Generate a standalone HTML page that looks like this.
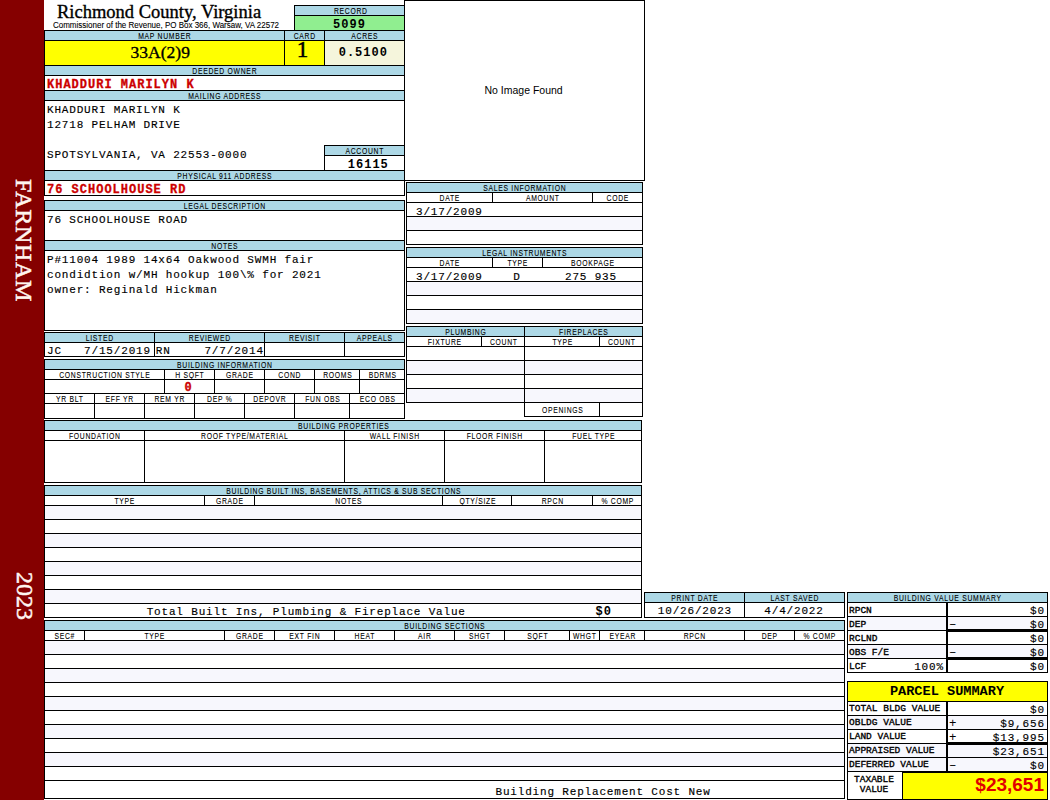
<!DOCTYPE html>
<html><head><meta charset="utf-8"><style>
html,body{margin:0;padding:0;background:#fff;}
body{width:1050px;height:800px;overflow:hidden;position:relative;}
i,b{position:absolute;display:block;font-style:normal;font-weight:normal;white-space:pre;}
</style></head><body>
<i style="left:0px;top:0px;width:44px;height:800px;background:#850000"></i>
<b style="left:12px;top:179px;writing-mode:vertical-rl;letter-spacing:0.7px;font-family:'Liberation Serif',serif;font-size:24px;line-height:24px;-webkit-text-stroke:0.5px #fff6f0;color:#fff6f0">FARNHAM</b>
<b style="left:13px;top:572px;writing-mode:vertical-rl;font-family:'Liberation Serif',serif;font-size:24px;line-height:24px;-webkit-text-stroke:0.5px #fff6f0;color:#fff6f0">2023</b>
<b style="top:3px;font-family:'Liberation Serif',serif;font-size:18.5px;line-height:18.5px;color:#000;left:57px;-webkit-text-stroke:0.35px #000;">Richmond County, Virginia</b>
<b style="top:21px;font-family:'Liberation Sans',sans-serif;font-size:8.5px;line-height:8.5px;color:#000;left:53px;transform:scaleX(0.94);transform-origin:0 0;-webkit-text-stroke:0.1px #000;">Commissioner of the Revenue, PO Box 366, Warsaw, VA 22572</b>
<i style="left:295px;top:6px;width:109px;height:9px;background:#add8e6"></i>
<i style="left:295px;top:16px;width:109px;height:14px;background:#90ee90"></i>
<i style="left:294px;top:5px;width:111px;height:1px;background:#000"></i>
<i style="left:294px;top:30px;width:111px;height:1px;background:#000"></i>
<i style="left:294px;top:5px;width:1px;height:26px;background:#000"></i>
<i style="left:404px;top:5px;width:1px;height:26px;background:#000"></i>
<i style="left:294px;top:15px;width:111px;height:1px;background:#000"></i>
<b style="top:7px;font-family:'Liberation Sans',sans-serif;font-size:8.5px;line-height:8.5px;color:#000;letter-spacing:0.9px;left:49.5px;width:600px;text-align:center;transform:scaleX(0.8);-webkit-text-stroke:0.1px #000;padding-left:0.9px;">RECORD</b>
<b style="top:19px;font-family:'Liberation Mono',monospace;font-size:12px;line-height:12px;color:#000;font-weight:bold;letter-spacing:1px;left:49.5px;width:600px;text-align:center;">5099</b>
<i style="left:45px;top:31px;width:359px;height:9px;background:#add8e6"></i>
<i style="left:45px;top:41px;width:279px;height:24px;background:#ffff00"></i>
<i style="left:325px;top:41px;width:79px;height:24px;background:#f5f5dc"></i>
<i style="left:44px;top:30px;width:361px;height:1px;background:#000"></i>
<i style="left:44px;top:40px;width:361px;height:1px;background:#000"></i>
<i style="left:44px;top:65px;width:361px;height:1px;background:#000"></i>
<i style="left:284px;top:30px;width:1px;height:36px;background:#000"></i>
<i style="left:324px;top:30px;width:1px;height:36px;background:#000"></i>
<b style="top:32px;font-family:'Liberation Sans',sans-serif;font-size:8.5px;line-height:8.5px;color:#000;letter-spacing:0.9px;left:-136px;width:600px;text-align:center;transform:scaleX(0.8);-webkit-text-stroke:0.1px #000;padding-left:0.9px;">MAP NUMBER</b>
<b style="top:32px;font-family:'Liberation Sans',sans-serif;font-size:8.5px;line-height:8.5px;color:#000;letter-spacing:0.9px;left:4px;width:600px;text-align:center;transform:scaleX(0.8);-webkit-text-stroke:0.1px #000;padding-left:0.9px;">CARD</b>
<b style="top:32px;font-family:'Liberation Sans',sans-serif;font-size:8.5px;line-height:8.5px;color:#000;letter-spacing:0.9px;left:64px;width:600px;text-align:center;transform:scaleX(0.8);-webkit-text-stroke:0.1px #000;padding-left:0.9px;">ACRES</b>
<b style="top:44px;font-family:'Liberation Serif',serif;font-size:17.5px;line-height:17.5px;color:#000;left:130.6px;-webkit-text-stroke:0.35px #000;">33A(2)9</b>
<b style="top:38px;font-family:'Liberation Serif',serif;font-size:23px;line-height:23px;color:#000;left:2.5px;width:600px;text-align:center;-webkit-text-stroke:0.5px #000;">1</b>
<b style="top:47px;font-family:'Liberation Mono',monospace;font-size:12px;line-height:12px;color:#000;font-weight:bold;letter-spacing:1px;left:338.7px;">0.5100</b>
<i style="left:45px;top:66px;width:359px;height:9px;background:#add8e6"></i>
<i style="left:44px;top:75px;width:361px;height:1px;background:#000"></i>
<i style="left:44px;top:90px;width:361px;height:1px;background:#000"></i>
<b style="top:67px;font-family:'Liberation Sans',sans-serif;font-size:8.5px;line-height:8.5px;color:#000;letter-spacing:0.9px;left:-76px;width:600px;text-align:center;transform:scaleX(0.8);-webkit-text-stroke:0.1px #000;padding-left:0.9px;">DEEDED OWNER</b>
<b style="top:79px;font-family:'Liberation Mono',monospace;font-size:12px;line-height:12px;color:#cc0000;font-weight:bold;letter-spacing:1px;left:47px;-webkit-text-stroke:0.3px;">KHADDURI MARILYN K</b>
<i style="left:45px;top:91px;width:359px;height:9px;background:#add8e6"></i>
<i style="left:44px;top:100px;width:361px;height:1px;background:#000"></i>
<b style="top:92px;font-family:'Liberation Sans',sans-serif;font-size:8.5px;line-height:8.5px;color:#000;letter-spacing:0.9px;left:-76px;width:600px;text-align:center;transform:scaleX(0.8);-webkit-text-stroke:0.1px #000;padding-left:0.9px;">MAILING ADDRESS</b>
<b style="top:105px;font-family:'Liberation Mono',monospace;font-size:11px;line-height:11px;color:#000;letter-spacing:0.82px;left:47px;-webkit-text-stroke:0.15px #000;">KHADDURI MARILYN K</b>
<b style="top:120px;font-family:'Liberation Mono',monospace;font-size:11px;line-height:11px;color:#000;letter-spacing:0.82px;left:47px;-webkit-text-stroke:0.15px #000;">12718 PELHAM DRIVE</b>
<b style="top:150px;font-family:'Liberation Mono',monospace;font-size:11px;line-height:11px;color:#000;letter-spacing:0.82px;left:47px;-webkit-text-stroke:0.15px #000;">SPOTSYLVANIA, VA 22553-0000</b>
<i style="left:325px;top:146px;width:79px;height:9px;background:#add8e6"></i>
<i style="left:324px;top:145px;width:81px;height:1px;background:#000"></i>
<i style="left:324px;top:155px;width:81px;height:1px;background:#000"></i>
<i style="left:324px;top:145px;width:1px;height:26px;background:#000"></i>
<b style="top:147px;font-family:'Liberation Sans',sans-serif;font-size:8.5px;line-height:8.5px;color:#000;letter-spacing:0.9px;left:64px;width:600px;text-align:center;transform:scaleX(0.8);-webkit-text-stroke:0.1px #000;padding-left:0.9px;">ACCOUNT</b>
<b style="top:159px;font-family:'Liberation Mono',monospace;font-size:12px;line-height:12px;color:#000;font-weight:bold;letter-spacing:1px;left:347.8px;">16115</b>
<i style="left:44px;top:170px;width:361px;height:1px;background:#000"></i>
<i style="left:45px;top:171px;width:359px;height:9px;background:#add8e6"></i>
<i style="left:44px;top:180px;width:361px;height:1px;background:#000"></i>
<i style="left:44px;top:195px;width:361px;height:1px;background:#000"></i>
<b style="top:172px;font-family:'Liberation Sans',sans-serif;font-size:8.5px;line-height:8.5px;color:#000;letter-spacing:0.9px;left:-76px;width:600px;text-align:center;transform:scaleX(0.8);-webkit-text-stroke:0.1px #000;padding-left:0.9px;">PHYSICAL 911 ADDRESS</b>
<b style="top:184px;font-family:'Liberation Mono',monospace;font-size:12px;line-height:12px;color:#cc0000;font-weight:bold;letter-spacing:1px;left:47px;-webkit-text-stroke:0.3px;">76 SCHOOLHOUSE RD</b>
<i style="left:44px;top:30px;width:1px;height:166px;background:#000"></i>
<i style="left:404px;top:0px;width:1px;height:196px;background:#000"></i>
<i style="left:45px;top:201px;width:359px;height:9px;background:#add8e6"></i>
<i style="left:44px;top:200px;width:361px;height:1px;background:#000"></i>
<i style="left:44px;top:330px;width:361px;height:1px;background:#000"></i>
<i style="left:44px;top:200px;width:1px;height:131px;background:#000"></i>
<i style="left:404px;top:200px;width:1px;height:131px;background:#000"></i>
<i style="left:44px;top:210px;width:361px;height:1px;background:#000"></i>
<i style="left:44px;top:240px;width:361px;height:1px;background:#000"></i>
<b style="top:202px;font-family:'Liberation Sans',sans-serif;font-size:8.5px;line-height:8.5px;color:#000;letter-spacing:0.9px;left:-76px;width:600px;text-align:center;transform:scaleX(0.8);-webkit-text-stroke:0.1px #000;padding-left:0.9px;">LEGAL DESCRIPTION</b>
<b style="top:215px;font-family:'Liberation Mono',monospace;font-size:11px;line-height:11px;color:#000;letter-spacing:0.82px;left:47px;-webkit-text-stroke:0.15px #000;">76 SCHOOLHOUSE ROAD</b>
<i style="left:45px;top:241px;width:359px;height:9px;background:#add8e6"></i>
<i style="left:44px;top:250px;width:361px;height:1px;background:#000"></i>
<b style="top:242px;font-family:'Liberation Sans',sans-serif;font-size:8.5px;line-height:8.5px;color:#000;letter-spacing:0.9px;left:-76px;width:600px;text-align:center;transform:scaleX(0.8);-webkit-text-stroke:0.1px #000;padding-left:0.9px;">NOTES</b>
<b style="top:255px;font-family:'Liberation Mono',monospace;font-size:11px;line-height:11px;color:#000;letter-spacing:0.82px;left:47px;-webkit-text-stroke:0.15px #000;">P#11004 1989 14x64 Oakwood SWMH fair</b>
<b style="top:270px;font-family:'Liberation Mono',monospace;font-size:11px;line-height:11px;color:#000;letter-spacing:0.82px;left:47px;-webkit-text-stroke:0.15px #000;">condidtion w/MH hookup 100\% for 2021</b>
<b style="top:285px;font-family:'Liberation Mono',monospace;font-size:11px;line-height:11px;color:#000;letter-spacing:0.82px;left:47px;-webkit-text-stroke:0.15px #000;">owner: Reginald Hickman</b>
<i style="left:45px;top:333px;width:359px;height:9px;background:#add8e6"></i>
<i style="left:44px;top:332px;width:361px;height:1px;background:#000"></i>
<i style="left:44px;top:356px;width:361px;height:1px;background:#000"></i>
<i style="left:44px;top:332px;width:1px;height:25px;background:#000"></i>
<i style="left:404px;top:332px;width:1px;height:25px;background:#000"></i>
<i style="left:44px;top:342px;width:361px;height:1px;background:#000"></i>
<i style="left:154px;top:332px;width:1px;height:25px;background:#000"></i>
<i style="left:264px;top:332px;width:1px;height:25px;background:#000"></i>
<i style="left:344px;top:332px;width:1px;height:25px;background:#000"></i>
<b style="top:334px;font-family:'Liberation Sans',sans-serif;font-size:8.5px;line-height:8.5px;color:#000;letter-spacing:0.9px;left:-201px;width:600px;text-align:center;transform:scaleX(0.8);-webkit-text-stroke:0.1px #000;padding-left:0.9px;">LISTED</b>
<b style="top:334px;font-family:'Liberation Sans',sans-serif;font-size:8.5px;line-height:8.5px;color:#000;letter-spacing:0.9px;left:-91px;width:600px;text-align:center;transform:scaleX(0.8);-webkit-text-stroke:0.1px #000;padding-left:0.9px;">REVIEWED</b>
<b style="top:334px;font-family:'Liberation Sans',sans-serif;font-size:8.5px;line-height:8.5px;color:#000;letter-spacing:0.9px;left:4px;width:600px;text-align:center;transform:scaleX(0.8);-webkit-text-stroke:0.1px #000;padding-left:0.9px;">REVISIT</b>
<b style="top:334px;font-family:'Liberation Sans',sans-serif;font-size:8.5px;line-height:8.5px;color:#000;letter-spacing:0.9px;left:74px;width:600px;text-align:center;transform:scaleX(0.8);-webkit-text-stroke:0.1px #000;padding-left:0.9px;">APPEALS</b>
<b style="top:346px;font-family:'Liberation Mono',monospace;font-size:11px;line-height:11px;color:#000;letter-spacing:0.82px;left:47px;-webkit-text-stroke:0.15px #000;">JC   7/15/2019</b>
<b style="top:346px;font-family:'Liberation Mono',monospace;font-size:11px;line-height:11px;color:#000;letter-spacing:0.82px;left:155.8px;-webkit-text-stroke:0.15px #000;">RN</b>
<b style="top:346px;font-family:'Liberation Mono',monospace;font-size:11px;line-height:11px;color:#000;letter-spacing:0.82px;left:-336.18px;width:600px;text-align:right;-webkit-text-stroke:0.15px #000;">7/7/2014</b>
<i style="left:45px;top:360px;width:359px;height:9px;background:#add8e6"></i>
<i style="left:44px;top:359px;width:361px;height:1px;background:#000"></i>
<i style="left:44px;top:418px;width:361px;height:1px;background:#000"></i>
<i style="left:44px;top:359px;width:1px;height:60px;background:#000"></i>
<i style="left:404px;top:359px;width:1px;height:60px;background:#000"></i>
<i style="left:44px;top:369px;width:361px;height:1px;background:#000"></i>
<i style="left:44px;top:379px;width:361px;height:1px;background:#000"></i>
<i style="left:44px;top:393px;width:361px;height:1px;background:#000"></i>
<i style="left:44px;top:403px;width:361px;height:1px;background:#000"></i>
<i style="left:164px;top:369px;width:1px;height:25px;background:#000"></i>
<i style="left:214px;top:369px;width:1px;height:25px;background:#000"></i>
<i style="left:264px;top:369px;width:1px;height:25px;background:#000"></i>
<i style="left:314px;top:369px;width:1px;height:25px;background:#000"></i>
<i style="left:359px;top:369px;width:1px;height:25px;background:#000"></i>
<i style="left:94px;top:393px;width:1px;height:26px;background:#000"></i>
<i style="left:144px;top:393px;width:1px;height:26px;background:#000"></i>
<i style="left:194px;top:393px;width:1px;height:26px;background:#000"></i>
<i style="left:244px;top:393px;width:1px;height:26px;background:#000"></i>
<i style="left:294px;top:393px;width:1px;height:26px;background:#000"></i>
<i style="left:349px;top:393px;width:1px;height:26px;background:#000"></i>
<b style="top:361px;font-family:'Liberation Sans',sans-serif;font-size:8.5px;line-height:8.5px;color:#000;letter-spacing:0.9px;left:-76px;width:600px;text-align:center;transform:scaleX(0.8);-webkit-text-stroke:0.1px #000;padding-left:0.9px;">BUILDING INFORMATION</b>
<b style="top:371px;font-family:'Liberation Sans',sans-serif;font-size:8.5px;line-height:8.5px;color:#000;letter-spacing:0.9px;left:-196px;width:600px;text-align:center;transform:scaleX(0.8);-webkit-text-stroke:0.1px #000;padding-left:0.9px;">CONSTRUCTION STYLE</b>
<b style="top:371px;font-family:'Liberation Sans',sans-serif;font-size:8.5px;line-height:8.5px;color:#000;letter-spacing:0.9px;left:-111px;width:600px;text-align:center;transform:scaleX(0.8);-webkit-text-stroke:0.1px #000;padding-left:0.9px;">H SQFT</b>
<b style="top:371px;font-family:'Liberation Sans',sans-serif;font-size:8.5px;line-height:8.5px;color:#000;letter-spacing:0.9px;left:-61px;width:600px;text-align:center;transform:scaleX(0.8);-webkit-text-stroke:0.1px #000;padding-left:0.9px;">GRADE</b>
<b style="top:371px;font-family:'Liberation Sans',sans-serif;font-size:8.5px;line-height:8.5px;color:#000;letter-spacing:0.9px;left:-11px;width:600px;text-align:center;transform:scaleX(0.8);-webkit-text-stroke:0.1px #000;padding-left:0.9px;">COND</b>
<b style="top:371px;font-family:'Liberation Sans',sans-serif;font-size:8.5px;line-height:8.5px;color:#000;letter-spacing:0.9px;left:36.5px;width:600px;text-align:center;transform:scaleX(0.8);-webkit-text-stroke:0.1px #000;padding-left:0.9px;">ROOMS</b>
<b style="top:371px;font-family:'Liberation Sans',sans-serif;font-size:8.5px;line-height:8.5px;color:#000;letter-spacing:0.9px;left:81.5px;width:600px;text-align:center;transform:scaleX(0.8);-webkit-text-stroke:0.1px #000;padding-left:0.9px;">BDRMS</b>
<b style="top:395px;font-family:'Liberation Sans',sans-serif;font-size:8.5px;line-height:8.5px;color:#000;letter-spacing:0.9px;left:-231px;width:600px;text-align:center;transform:scaleX(0.8);-webkit-text-stroke:0.1px #000;padding-left:0.9px;">YR BLT</b>
<b style="top:395px;font-family:'Liberation Sans',sans-serif;font-size:8.5px;line-height:8.5px;color:#000;letter-spacing:0.9px;left:-181px;width:600px;text-align:center;transform:scaleX(0.8);-webkit-text-stroke:0.1px #000;padding-left:0.9px;">EFF YR</b>
<b style="top:395px;font-family:'Liberation Sans',sans-serif;font-size:8.5px;line-height:8.5px;color:#000;letter-spacing:0.9px;left:-131px;width:600px;text-align:center;transform:scaleX(0.8);-webkit-text-stroke:0.1px #000;padding-left:0.9px;">REM YR</b>
<b style="top:395px;font-family:'Liberation Sans',sans-serif;font-size:8.5px;line-height:8.5px;color:#000;letter-spacing:0.9px;left:-81px;width:600px;text-align:center;transform:scaleX(0.8);-webkit-text-stroke:0.1px #000;padding-left:0.9px;">DEP %</b>
<b style="top:395px;font-family:'Liberation Sans',sans-serif;font-size:8.5px;line-height:8.5px;color:#000;letter-spacing:0.9px;left:-31px;width:600px;text-align:center;transform:scaleX(0.8);-webkit-text-stroke:0.1px #000;padding-left:0.9px;">DEPOVR</b>
<b style="top:395px;font-family:'Liberation Sans',sans-serif;font-size:8.5px;line-height:8.5px;color:#000;letter-spacing:0.9px;left:21.5px;width:600px;text-align:center;transform:scaleX(0.8);-webkit-text-stroke:0.1px #000;padding-left:0.9px;">FUN OBS</b>
<b style="top:395px;font-family:'Liberation Sans',sans-serif;font-size:8.5px;line-height:8.5px;color:#000;letter-spacing:0.9px;left:76.5px;width:600px;text-align:center;transform:scaleX(0.8);-webkit-text-stroke:0.1px #000;padding-left:0.9px;">ECO OBS</b>
<b style="top:382px;font-family:'Liberation Mono',monospace;font-size:12px;line-height:12px;color:#cc0000;font-weight:bold;left:-112px;width:600px;text-align:center;-webkit-text-stroke:0.3px;">0</b>
<i style="left:404px;top:0px;width:241px;height:1px;background:#000"></i>
<i style="left:404px;top:180px;width:241px;height:1px;background:#000"></i>
<i style="left:404px;top:0px;width:1px;height:181px;background:#000"></i>
<i style="left:644px;top:0px;width:1px;height:181px;background:#000"></i>
<b style="top:85px;font-family:'Liberation Sans',sans-serif;font-size:10.5px;line-height:10.5px;color:#000;left:484.5px;">No Image Found</b>
<i style="left:407px;top:183px;width:235px;height:9px;background:#add8e6"></i>
<i style="left:406px;top:182px;width:237px;height:1px;background:#000"></i>
<i style="left:406px;top:244px;width:237px;height:1px;background:#000"></i>
<i style="left:406px;top:182px;width:1px;height:63px;background:#000"></i>
<i style="left:642px;top:182px;width:1px;height:63px;background:#000"></i>
<i style="left:406px;top:192px;width:237px;height:1px;background:#000"></i>
<i style="left:406px;top:202px;width:237px;height:1px;background:#000"></i>
<i style="left:406px;top:216px;width:237px;height:1px;background:#000"></i>
<i style="left:406px;top:230px;width:237px;height:1px;background:#000"></i>
<i style="left:407px;top:217px;width:235px;height:13px;background:#f7f7fd"></i>
<i style="left:492px;top:192px;width:1px;height:11px;background:#000"></i>
<i style="left:592px;top:192px;width:1px;height:11px;background:#000"></i>
<b style="top:184px;font-family:'Liberation Sans',sans-serif;font-size:8.5px;line-height:8.5px;color:#000;letter-spacing:0.9px;left:224px;width:600px;text-align:center;transform:scaleX(0.8);-webkit-text-stroke:0.1px #000;padding-left:0.9px;">SALES INFORMATION</b>
<b style="top:194px;font-family:'Liberation Sans',sans-serif;font-size:8.5px;line-height:8.5px;color:#000;letter-spacing:0.9px;left:149px;width:600px;text-align:center;transform:scaleX(0.8);-webkit-text-stroke:0.1px #000;padding-left:0.9px;">DATE</b>
<b style="top:194px;font-family:'Liberation Sans',sans-serif;font-size:8.5px;line-height:8.5px;color:#000;letter-spacing:0.9px;left:242px;width:600px;text-align:center;transform:scaleX(0.8);-webkit-text-stroke:0.1px #000;padding-left:0.9px;">AMOUNT</b>
<b style="top:194px;font-family:'Liberation Sans',sans-serif;font-size:8.5px;line-height:8.5px;color:#000;letter-spacing:0.9px;left:317px;width:600px;text-align:center;transform:scaleX(0.8);-webkit-text-stroke:0.1px #000;padding-left:0.9px;">CODE</b>
<b style="top:207px;font-family:'Liberation Mono',monospace;font-size:11px;line-height:11px;color:#000;letter-spacing:0.82px;left:416px;-webkit-text-stroke:0.15px #000;">3/17/2009</b>
<i style="left:407px;top:248px;width:235px;height:9px;background:#add8e6"></i>
<i style="left:406px;top:247px;width:237px;height:1px;background:#000"></i>
<i style="left:406px;top:323px;width:237px;height:1px;background:#000"></i>
<i style="left:406px;top:247px;width:1px;height:77px;background:#000"></i>
<i style="left:642px;top:247px;width:1px;height:77px;background:#000"></i>
<i style="left:406px;top:257px;width:237px;height:1px;background:#000"></i>
<i style="left:406px;top:267px;width:237px;height:1px;background:#000"></i>
<i style="left:406px;top:281px;width:237px;height:1px;background:#000"></i>
<i style="left:406px;top:295px;width:237px;height:1px;background:#000"></i>
<i style="left:406px;top:309px;width:237px;height:1px;background:#000"></i>
<i style="left:407px;top:282px;width:235px;height:13px;background:#f7f7fd"></i>
<i style="left:407px;top:310px;width:235px;height:13px;background:#f7f7fd"></i>
<i style="left:492px;top:257px;width:1px;height:11px;background:#000"></i>
<i style="left:542px;top:257px;width:1px;height:11px;background:#000"></i>
<b style="top:249px;font-family:'Liberation Sans',sans-serif;font-size:8.5px;line-height:8.5px;color:#000;letter-spacing:0.9px;left:224px;width:600px;text-align:center;transform:scaleX(0.8);-webkit-text-stroke:0.1px #000;padding-left:0.9px;">LEGAL INSTRUMENTS</b>
<b style="top:259px;font-family:'Liberation Sans',sans-serif;font-size:8.5px;line-height:8.5px;color:#000;letter-spacing:0.9px;left:149px;width:600px;text-align:center;transform:scaleX(0.8);-webkit-text-stroke:0.1px #000;padding-left:0.9px;">DATE</b>
<b style="top:259px;font-family:'Liberation Sans',sans-serif;font-size:8.5px;line-height:8.5px;color:#000;letter-spacing:0.9px;left:217px;width:600px;text-align:center;transform:scaleX(0.8);-webkit-text-stroke:0.1px #000;padding-left:0.9px;">TYPE</b>
<b style="top:259px;font-family:'Liberation Sans',sans-serif;font-size:8.5px;line-height:8.5px;color:#000;letter-spacing:0.9px;left:292px;width:600px;text-align:center;transform:scaleX(0.8);-webkit-text-stroke:0.1px #000;padding-left:0.9px;">BOOKPAGE</b>
<b style="top:272px;font-family:'Liberation Mono',monospace;font-size:11px;line-height:11px;color:#000;letter-spacing:0.82px;left:416px;-webkit-text-stroke:0.15px #000;">3/17/2009</b>
<b style="top:272px;font-family:'Liberation Mono',monospace;font-size:11px;line-height:11px;color:#000;letter-spacing:0.82px;left:217px;width:600px;text-align:center;-webkit-text-stroke:0.15px #000;">D</b>
<b style="top:272px;font-family:'Liberation Mono',monospace;font-size:11px;line-height:11px;color:#000;letter-spacing:0.82px;left:291px;width:600px;text-align:center;-webkit-text-stroke:0.15px #000;">275 935</b>
<i style="left:407px;top:327px;width:235px;height:9px;background:#add8e6"></i>
<i style="left:406px;top:326px;width:237px;height:1px;background:#000"></i>
<i style="left:406px;top:402px;width:237px;height:1px;background:#000"></i>
<i style="left:406px;top:326px;width:1px;height:77px;background:#000"></i>
<i style="left:642px;top:326px;width:1px;height:77px;background:#000"></i>
<i style="left:406px;top:336px;width:237px;height:1px;background:#000"></i>
<i style="left:406px;top:346px;width:237px;height:1px;background:#000"></i>
<i style="left:406px;top:360px;width:237px;height:1px;background:#000"></i>
<i style="left:406px;top:374px;width:237px;height:1px;background:#000"></i>
<i style="left:406px;top:388px;width:237px;height:1px;background:#000"></i>
<i style="left:407px;top:361px;width:235px;height:13px;background:#f7f7fd"></i>
<i style="left:407px;top:389px;width:235px;height:13px;background:#f7f7fd"></i>
<i style="left:524px;top:326px;width:1px;height:91px;background:#000"></i>
<i style="left:481px;top:336px;width:1px;height:11px;background:#000"></i>
<i style="left:599px;top:336px;width:1px;height:11px;background:#000"></i>
<i style="left:524px;top:402px;width:119px;height:1px;background:#000"></i>
<i style="left:524px;top:416px;width:119px;height:1px;background:#000"></i>
<i style="left:524px;top:402px;width:1px;height:15px;background:#000"></i>
<i style="left:642px;top:402px;width:1px;height:15px;background:#000"></i>
<i style="left:599px;top:402px;width:1px;height:15px;background:#000"></i>
<i style="left:525px;top:361px;width:117px;height:13px;background:#f7f7fd"></i>
<b style="top:328px;font-family:'Liberation Sans',sans-serif;font-size:8.5px;line-height:8.5px;color:#000;letter-spacing:0.9px;left:165px;width:600px;text-align:center;transform:scaleX(0.8);-webkit-text-stroke:0.1px #000;padding-left:0.9px;">PLUMBING</b>
<b style="top:328px;font-family:'Liberation Sans',sans-serif;font-size:8.5px;line-height:8.5px;color:#000;letter-spacing:0.9px;left:283px;width:600px;text-align:center;transform:scaleX(0.8);-webkit-text-stroke:0.1px #000;padding-left:0.9px;">FIREPLACES</b>
<b style="top:338px;font-family:'Liberation Sans',sans-serif;font-size:8.5px;line-height:8.5px;color:#000;letter-spacing:0.9px;left:143.5px;width:600px;text-align:center;transform:scaleX(0.8);-webkit-text-stroke:0.1px #000;padding-left:0.9px;">FIXTURE</b>
<b style="top:338px;font-family:'Liberation Sans',sans-serif;font-size:8.5px;line-height:8.5px;color:#000;letter-spacing:0.9px;left:202.5px;width:600px;text-align:center;transform:scaleX(0.8);-webkit-text-stroke:0.1px #000;padding-left:0.9px;">COUNT</b>
<b style="top:338px;font-family:'Liberation Sans',sans-serif;font-size:8.5px;line-height:8.5px;color:#000;letter-spacing:0.9px;left:261.5px;width:600px;text-align:center;transform:scaleX(0.8);-webkit-text-stroke:0.1px #000;padding-left:0.9px;">TYPE</b>
<b style="top:338px;font-family:'Liberation Sans',sans-serif;font-size:8.5px;line-height:8.5px;color:#000;letter-spacing:0.9px;left:320.5px;width:600px;text-align:center;transform:scaleX(0.8);-webkit-text-stroke:0.1px #000;padding-left:0.9px;">COUNT</b>
<b style="top:406px;font-family:'Liberation Sans',sans-serif;font-size:8.5px;line-height:8.5px;color:#000;letter-spacing:0.9px;left:261.5px;width:600px;text-align:center;transform:scaleX(0.8);-webkit-text-stroke:0.1px #000;padding-left:0.9px;">OPENINGS</b>
<i style="left:45px;top:421px;width:596px;height:9px;background:#add8e6"></i>
<i style="left:44px;top:420px;width:598px;height:1px;background:#000"></i>
<i style="left:44px;top:482px;width:598px;height:1px;background:#000"></i>
<i style="left:44px;top:420px;width:1px;height:63px;background:#000"></i>
<i style="left:641px;top:420px;width:1px;height:63px;background:#000"></i>
<i style="left:44px;top:430px;width:598px;height:1px;background:#000"></i>
<i style="left:44px;top:440px;width:598px;height:1px;background:#000"></i>
<i style="left:144px;top:430px;width:1px;height:53px;background:#000"></i>
<i style="left:344px;top:430px;width:1px;height:53px;background:#000"></i>
<i style="left:444px;top:430px;width:1px;height:53px;background:#000"></i>
<i style="left:544px;top:430px;width:1px;height:53px;background:#000"></i>
<b style="top:422px;font-family:'Liberation Sans',sans-serif;font-size:8.5px;line-height:8.5px;color:#000;letter-spacing:0.9px;left:43px;width:600px;text-align:center;transform:scaleX(0.8);-webkit-text-stroke:0.1px #000;padding-left:0.9px;">BUILDING PROPERTIES</b>
<b style="top:432px;font-family:'Liberation Sans',sans-serif;font-size:8.5px;line-height:8.5px;color:#000;letter-spacing:0.9px;left:-206px;width:600px;text-align:center;transform:scaleX(0.8);-webkit-text-stroke:0.1px #000;padding-left:0.9px;">FOUNDATION</b>
<b style="top:432px;font-family:'Liberation Sans',sans-serif;font-size:8.5px;line-height:8.5px;color:#000;letter-spacing:0.9px;left:-56px;width:600px;text-align:center;transform:scaleX(0.8);-webkit-text-stroke:0.1px #000;padding-left:0.9px;">ROOF TYPE/MATERIAL</b>
<b style="top:432px;font-family:'Liberation Sans',sans-serif;font-size:8.5px;line-height:8.5px;color:#000;letter-spacing:0.9px;left:94px;width:600px;text-align:center;transform:scaleX(0.8);-webkit-text-stroke:0.1px #000;padding-left:0.9px;">WALL FINISH</b>
<b style="top:432px;font-family:'Liberation Sans',sans-serif;font-size:8.5px;line-height:8.5px;color:#000;letter-spacing:0.9px;left:194px;width:600px;text-align:center;transform:scaleX(0.8);-webkit-text-stroke:0.1px #000;padding-left:0.9px;">FLOOR FINISH</b>
<b style="top:432px;font-family:'Liberation Sans',sans-serif;font-size:8.5px;line-height:8.5px;color:#000;letter-spacing:0.9px;left:293px;width:600px;text-align:center;transform:scaleX(0.8);-webkit-text-stroke:0.1px #000;padding-left:0.9px;">FUEL TYPE</b>
<i style="left:45px;top:486px;width:596px;height:9px;background:#add8e6"></i>
<i style="left:44px;top:485px;width:598px;height:1px;background:#000"></i>
<i style="left:44px;top:617px;width:598px;height:1px;background:#000"></i>
<i style="left:44px;top:485px;width:1px;height:133px;background:#000"></i>
<i style="left:641px;top:485px;width:1px;height:133px;background:#000"></i>
<i style="left:44px;top:495px;width:598px;height:1px;background:#000"></i>
<i style="left:44px;top:505px;width:598px;height:1px;background:#000"></i>
<i style="left:44px;top:519px;width:598px;height:1px;background:#000"></i>
<i style="left:44px;top:533px;width:598px;height:1px;background:#000"></i>
<i style="left:44px;top:547px;width:598px;height:1px;background:#000"></i>
<i style="left:44px;top:561px;width:598px;height:1px;background:#000"></i>
<i style="left:44px;top:575px;width:598px;height:1px;background:#000"></i>
<i style="left:44px;top:589px;width:598px;height:1px;background:#000"></i>
<i style="left:44px;top:603px;width:598px;height:1px;background:#000"></i>
<i style="left:45px;top:506px;width:596px;height:13px;background:#f7f7fd"></i>
<i style="left:45px;top:534px;width:596px;height:13px;background:#f7f7fd"></i>
<i style="left:45px;top:562px;width:596px;height:13px;background:#f7f7fd"></i>
<i style="left:45px;top:590px;width:596px;height:13px;background:#f7f7fd"></i>
<i style="left:204px;top:495px;width:1px;height:11px;background:#000"></i>
<i style="left:254px;top:495px;width:1px;height:11px;background:#000"></i>
<i style="left:442px;top:495px;width:1px;height:11px;background:#000"></i>
<i style="left:511px;top:495px;width:1px;height:11px;background:#000"></i>
<i style="left:592px;top:495px;width:1px;height:11px;background:#000"></i>
<b style="top:487px;font-family:'Liberation Sans',sans-serif;font-size:8.5px;line-height:8.5px;color:#000;letter-spacing:0.9px;left:43px;width:600px;text-align:center;transform:scaleX(0.8);-webkit-text-stroke:0.1px #000;padding-left:0.9px;">BUILDING BUILT INS, BASEMENTS, ATTICS &amp; SUB SECTIONS</b>
<b style="top:497px;font-family:'Liberation Sans',sans-serif;font-size:8.5px;line-height:8.5px;color:#000;letter-spacing:0.9px;left:-176px;width:600px;text-align:center;transform:scaleX(0.8);-webkit-text-stroke:0.1px #000;padding-left:0.9px;">TYPE</b>
<b style="top:497px;font-family:'Liberation Sans',sans-serif;font-size:8.5px;line-height:8.5px;color:#000;letter-spacing:0.9px;left:-71px;width:600px;text-align:center;transform:scaleX(0.8);-webkit-text-stroke:0.1px #000;padding-left:0.9px;">GRADE</b>
<b style="top:497px;font-family:'Liberation Sans',sans-serif;font-size:8.5px;line-height:8.5px;color:#000;letter-spacing:0.9px;left:48px;width:600px;text-align:center;transform:scaleX(0.8);-webkit-text-stroke:0.1px #000;padding-left:0.9px;">NOTES</b>
<b style="top:497px;font-family:'Liberation Sans',sans-serif;font-size:8.5px;line-height:8.5px;color:#000;letter-spacing:0.9px;left:176.5px;width:600px;text-align:center;transform:scaleX(0.8);-webkit-text-stroke:0.1px #000;padding-left:0.9px;">QTY/SIZE</b>
<b style="top:497px;font-family:'Liberation Sans',sans-serif;font-size:8.5px;line-height:8.5px;color:#000;letter-spacing:0.9px;left:251.5px;width:600px;text-align:center;transform:scaleX(0.8);-webkit-text-stroke:0.1px #000;padding-left:0.9px;">RPCN</b>
<b style="top:497px;font-family:'Liberation Sans',sans-serif;font-size:8.5px;line-height:8.5px;color:#000;letter-spacing:0.9px;left:317px;width:600px;text-align:center;transform:scaleX(0.8);-webkit-text-stroke:0.1px #000;padding-left:0.9px;">% COMP</b>
<b style="top:607px;font-family:'Liberation Mono',monospace;font-size:11px;line-height:11px;color:#000;letter-spacing:0.82px;left:146.7px;-webkit-text-stroke:0.15px #000;">Total Built Ins, Plumbing &amp; Fireplace Value</b>
<b style="top:606px;font-family:'Liberation Mono',monospace;font-size:12px;line-height:12px;color:#000;font-weight:bold;letter-spacing:1px;left:595.5px;">$0</b>
<i style="left:645px;top:593px;width:199px;height:9px;background:#add8e6"></i>
<i style="left:644px;top:592px;width:201px;height:1px;background:#000"></i>
<i style="left:644px;top:617px;width:201px;height:1px;background:#000"></i>
<i style="left:644px;top:592px;width:1px;height:26px;background:#000"></i>
<i style="left:844px;top:592px;width:1px;height:26px;background:#000"></i>
<i style="left:644px;top:602px;width:201px;height:1px;background:#000"></i>
<i style="left:744px;top:593px;width:1px;height:25px;background:#000"></i>
<b style="top:594px;font-family:'Liberation Sans',sans-serif;font-size:8.5px;line-height:8.5px;color:#000;letter-spacing:0.9px;left:394px;width:600px;text-align:center;transform:scaleX(0.8);-webkit-text-stroke:0.1px #000;padding-left:0.9px;">PRINT DATE</b>
<b style="top:594px;font-family:'Liberation Sans',sans-serif;font-size:8.5px;line-height:8.5px;color:#000;letter-spacing:0.9px;left:494px;width:600px;text-align:center;transform:scaleX(0.8);-webkit-text-stroke:0.1px #000;padding-left:0.9px;">LAST SAVED</b>
<b style="top:606px;font-family:'Liberation Mono',monospace;font-size:11px;line-height:11px;color:#000;letter-spacing:0.82px;left:657.8px;-webkit-text-stroke:0.15px #000;">10/26/2023</b>
<b style="top:606px;font-family:'Liberation Mono',monospace;font-size:11px;line-height:11px;color:#000;letter-spacing:0.82px;left:494px;width:600px;text-align:center;-webkit-text-stroke:0.15px #000;">4/4/2022</b>
<i style="left:45px;top:621px;width:799px;height:9px;background:#add8e6"></i>
<i style="left:44px;top:620px;width:801px;height:1px;background:#000"></i>
<i style="left:44px;top:798px;width:801px;height:1px;background:#000"></i>
<i style="left:44px;top:620px;width:1px;height:179px;background:#000"></i>
<i style="left:844px;top:620px;width:1px;height:179px;background:#000"></i>
<i style="left:44px;top:630px;width:801px;height:1px;background:#000"></i>
<i style="left:44px;top:640px;width:801px;height:1px;background:#000"></i>
<i style="left:44px;top:654px;width:801px;height:1px;background:#000"></i>
<i style="left:44px;top:668px;width:801px;height:1px;background:#000"></i>
<i style="left:44px;top:682px;width:801px;height:1px;background:#000"></i>
<i style="left:44px;top:696px;width:801px;height:1px;background:#000"></i>
<i style="left:44px;top:710px;width:801px;height:1px;background:#000"></i>
<i style="left:44px;top:724px;width:801px;height:1px;background:#000"></i>
<i style="left:44px;top:738px;width:801px;height:1px;background:#000"></i>
<i style="left:44px;top:752px;width:801px;height:1px;background:#000"></i>
<i style="left:44px;top:766px;width:801px;height:1px;background:#000"></i>
<i style="left:44px;top:780px;width:801px;height:1px;background:#000"></i>
<i style="left:45px;top:641px;width:799px;height:13px;background:#f7f7fd"></i>
<i style="left:45px;top:669px;width:799px;height:13px;background:#f7f7fd"></i>
<i style="left:45px;top:697px;width:799px;height:13px;background:#f7f7fd"></i>
<i style="left:45px;top:725px;width:799px;height:13px;background:#f7f7fd"></i>
<i style="left:45px;top:753px;width:799px;height:13px;background:#f7f7fd"></i>
<i style="left:84px;top:630px;width:1px;height:11px;background:#000"></i>
<i style="left:224px;top:630px;width:1px;height:11px;background:#000"></i>
<i style="left:274px;top:630px;width:1px;height:11px;background:#000"></i>
<i style="left:334px;top:630px;width:1px;height:11px;background:#000"></i>
<i style="left:394px;top:630px;width:1px;height:11px;background:#000"></i>
<i style="left:454px;top:630px;width:1px;height:11px;background:#000"></i>
<i style="left:504px;top:630px;width:1px;height:11px;background:#000"></i>
<i style="left:569px;top:630px;width:1px;height:11px;background:#000"></i>
<i style="left:599px;top:630px;width:1px;height:11px;background:#000"></i>
<i style="left:644px;top:630px;width:1px;height:11px;background:#000"></i>
<i style="left:744px;top:630px;width:1px;height:11px;background:#000"></i>
<i style="left:794px;top:630px;width:1px;height:11px;background:#000"></i>
<b style="top:622px;font-family:'Liberation Sans',sans-serif;font-size:8.5px;line-height:8.5px;color:#000;letter-spacing:0.9px;left:144px;width:600px;text-align:center;transform:scaleX(0.8);-webkit-text-stroke:0.1px #000;padding-left:0.9px;">BUILDING SECTIONS</b>
<b style="top:632px;font-family:'Liberation Sans',sans-serif;font-size:8.5px;line-height:8.5px;color:#000;letter-spacing:0.9px;left:-236px;width:600px;text-align:center;transform:scaleX(0.8);-webkit-text-stroke:0.1px #000;padding-left:0.9px;">SEC#</b>
<b style="top:632px;font-family:'Liberation Sans',sans-serif;font-size:8.5px;line-height:8.5px;color:#000;letter-spacing:0.9px;left:-146px;width:600px;text-align:center;transform:scaleX(0.8);-webkit-text-stroke:0.1px #000;padding-left:0.9px;">TYPE</b>
<b style="top:632px;font-family:'Liberation Sans',sans-serif;font-size:8.5px;line-height:8.5px;color:#000;letter-spacing:0.9px;left:-51px;width:600px;text-align:center;transform:scaleX(0.8);-webkit-text-stroke:0.1px #000;padding-left:0.9px;">GRADE</b>
<b style="top:632px;font-family:'Liberation Sans',sans-serif;font-size:8.5px;line-height:8.5px;color:#000;letter-spacing:0.9px;left:4px;width:600px;text-align:center;transform:scaleX(0.8);-webkit-text-stroke:0.1px #000;padding-left:0.9px;">EXT FIN</b>
<b style="top:632px;font-family:'Liberation Sans',sans-serif;font-size:8.5px;line-height:8.5px;color:#000;letter-spacing:0.9px;left:64px;width:600px;text-align:center;transform:scaleX(0.8);-webkit-text-stroke:0.1px #000;padding-left:0.9px;">HEAT</b>
<b style="top:632px;font-family:'Liberation Sans',sans-serif;font-size:8.5px;line-height:8.5px;color:#000;letter-spacing:0.9px;left:124px;width:600px;text-align:center;transform:scaleX(0.8);-webkit-text-stroke:0.1px #000;padding-left:0.9px;">AIR</b>
<b style="top:632px;font-family:'Liberation Sans',sans-serif;font-size:8.5px;line-height:8.5px;color:#000;letter-spacing:0.9px;left:179px;width:600px;text-align:center;transform:scaleX(0.8);-webkit-text-stroke:0.1px #000;padding-left:0.9px;">SHGT</b>
<b style="top:632px;font-family:'Liberation Sans',sans-serif;font-size:8.5px;line-height:8.5px;color:#000;letter-spacing:0.9px;left:236.5px;width:600px;text-align:center;transform:scaleX(0.8);-webkit-text-stroke:0.1px #000;padding-left:0.9px;">SQFT</b>
<b style="top:632px;font-family:'Liberation Sans',sans-serif;font-size:8.5px;line-height:8.5px;color:#000;letter-spacing:0.9px;left:284px;width:600px;text-align:center;transform:scaleX(0.8);-webkit-text-stroke:0.1px #000;padding-left:0.9px;">WHGT</b>
<b style="top:632px;font-family:'Liberation Sans',sans-serif;font-size:8.5px;line-height:8.5px;color:#000;letter-spacing:0.9px;left:321.5px;width:600px;text-align:center;transform:scaleX(0.8);-webkit-text-stroke:0.1px #000;padding-left:0.9px;">EYEAR</b>
<b style="top:632px;font-family:'Liberation Sans',sans-serif;font-size:8.5px;line-height:8.5px;color:#000;letter-spacing:0.9px;left:394px;width:600px;text-align:center;transform:scaleX(0.8);-webkit-text-stroke:0.1px #000;padding-left:0.9px;">RPCN</b>
<b style="top:632px;font-family:'Liberation Sans',sans-serif;font-size:8.5px;line-height:8.5px;color:#000;letter-spacing:0.9px;left:469px;width:600px;text-align:center;transform:scaleX(0.8);-webkit-text-stroke:0.1px #000;padding-left:0.9px;">DEP</b>
<b style="top:632px;font-family:'Liberation Sans',sans-serif;font-size:8.5px;line-height:8.5px;color:#000;letter-spacing:0.9px;left:519px;width:600px;text-align:center;transform:scaleX(0.8);-webkit-text-stroke:0.1px #000;padding-left:0.9px;">% COMP</b>
<b style="top:787px;font-family:'Liberation Mono',monospace;font-size:11px;line-height:11px;color:#000;letter-spacing:0.82px;left:495.5px;-webkit-text-stroke:0.15px #000;">Building Replacement Cost New</b>
<i style="left:848px;top:617px;width:199px;height:13px;background:#f7f7fd"></i>
<i style="left:848px;top:645px;width:199px;height:13px;background:#f7f7fd"></i>
<i style="left:848px;top:593px;width:199px;height:9px;background:#add8e6"></i>
<i style="left:847px;top:592px;width:201px;height:1px;background:#000"></i>
<i style="left:847px;top:672px;width:201px;height:1px;background:#000"></i>
<i style="left:847px;top:592px;width:1px;height:81px;background:#000"></i>
<i style="left:1047px;top:592px;width:1px;height:81px;background:#000"></i>
<i style="left:847px;top:602px;width:201px;height:1px;background:#000"></i>
<i style="left:847px;top:616px;width:201px;height:1px;background:#000"></i>
<i style="left:847px;top:644px;width:201px;height:1px;background:#000"></i>
<i style="left:847px;top:630px;width:101px;height:1px;background:#000"></i>
<i style="left:947px;top:629px;width:101px;height:3px;background:#000"></i>
<i style="left:847px;top:658px;width:101px;height:1px;background:#000"></i>
<i style="left:947px;top:657px;width:101px;height:3px;background:#000"></i>
<i style="left:946px;top:602px;width:2px;height:71px;background:#000"></i>
<b style="top:594px;font-family:'Liberation Sans',sans-serif;font-size:8.5px;line-height:8.5px;color:#000;letter-spacing:0.9px;left:647px;width:600px;text-align:center;transform:scaleX(0.8);-webkit-text-stroke:0.1px #000;padding-left:0.9px;">BUILDING VALUE SUMMARY</b>
<b style="top:606px;font-family:'Liberation Mono',monospace;font-size:9.5px;line-height:9.5px;color:#000;left:849px;-webkit-text-stroke:0.35px #000;">RPCN</b>
<b style="top:606px;font-family:'Liberation Mono',monospace;font-size:11px;line-height:11px;color:#000;letter-spacing:0.82px;left:444.82px;width:600px;text-align:right;-webkit-text-stroke:0.15px #000;">$0</b>
<b style="top:620px;font-family:'Liberation Mono',monospace;font-size:9.5px;line-height:9.5px;color:#000;left:849px;-webkit-text-stroke:0.35px #000;">DEP</b>
<b style="top:619px;font-family:'Liberation Mono',monospace;font-size:12.4px;line-height:12.4px;color:#000;left:949px;">–</b>
<b style="top:620px;font-family:'Liberation Mono',monospace;font-size:11px;line-height:11px;color:#000;letter-spacing:0.82px;left:444.82px;width:600px;text-align:right;-webkit-text-stroke:0.15px #000;">$0</b>
<b style="top:634px;font-family:'Liberation Mono',monospace;font-size:9.5px;line-height:9.5px;color:#000;left:849px;-webkit-text-stroke:0.35px #000;">RCLND</b>
<b style="top:634px;font-family:'Liberation Mono',monospace;font-size:11px;line-height:11px;color:#000;letter-spacing:0.82px;left:444.82px;width:600px;text-align:right;-webkit-text-stroke:0.15px #000;">$0</b>
<b style="top:648px;font-family:'Liberation Mono',monospace;font-size:9.5px;line-height:9.5px;color:#000;left:849px;-webkit-text-stroke:0.35px #000;">OBS F/E</b>
<b style="top:647px;font-family:'Liberation Mono',monospace;font-size:12.4px;line-height:12.4px;color:#000;left:949px;">–</b>
<b style="top:648px;font-family:'Liberation Mono',monospace;font-size:11px;line-height:11px;color:#000;letter-spacing:0.82px;left:444.82px;width:600px;text-align:right;-webkit-text-stroke:0.15px #000;">$0</b>
<b style="top:662px;font-family:'Liberation Mono',monospace;font-size:9.5px;line-height:9.5px;color:#000;left:849px;-webkit-text-stroke:0.35px #000;">LCF</b>
<b style="top:662px;font-family:'Liberation Mono',monospace;font-size:11px;line-height:11px;color:#000;letter-spacing:0.82px;left:444.82px;width:600px;text-align:right;-webkit-text-stroke:0.15px #000;">$0</b>
<b style="top:662px;font-family:'Liberation Mono',monospace;font-size:11px;line-height:11px;color:#000;letter-spacing:0.82px;left:343.82px;width:600px;text-align:right;-webkit-text-stroke:0.15px #000;">100%</b>
<i style="left:848px;top:716px;width:199px;height:13px;background:#f7f7fd"></i>
<i style="left:848px;top:744px;width:199px;height:13px;background:#f7f7fd"></i>
<i style="left:848px;top:758px;width:199px;height:13px;background:#f7f7fd"></i>
<i style="left:848px;top:682px;width:199px;height:19px;background:#ffff00"></i>
<i style="left:847px;top:681px;width:201px;height:1px;background:#000"></i>
<i style="left:847px;top:799px;width:201px;height:1px;background:#000"></i>
<i style="left:847px;top:681px;width:1px;height:119px;background:#000"></i>
<i style="left:1047px;top:681px;width:1px;height:119px;background:#000"></i>
<i style="left:847px;top:701px;width:201px;height:1px;background:#000"></i>
<i style="left:847px;top:715px;width:201px;height:1px;background:#000"></i>
<i style="left:847px;top:729px;width:201px;height:1px;background:#000"></i>
<i style="left:847px;top:757px;width:201px;height:1px;background:#000"></i>
<i style="left:847px;top:743px;width:101px;height:1px;background:#000"></i>
<i style="left:947px;top:742px;width:101px;height:3px;background:#000"></i>
<i style="left:847px;top:771px;width:201px;height:1px;background:#000"></i>
<i style="left:902px;top:771px;width:146px;height:3px;background:#000"></i>
<i style="left:946px;top:701px;width:2px;height:71px;background:#000"></i>
<b style="top:685px;font-family:'Liberation Mono',monospace;font-size:13.6px;line-height:13.6px;color:#000;font-weight:bold;left:647px;width:600px;text-align:center;">PARCEL SUMMARY</b>
<b style="top:704px;font-family:'Liberation Mono',monospace;font-size:9.5px;line-height:9.5px;color:#000;left:849px;-webkit-text-stroke:0.35px #000;">TOTAL BLDG VALUE</b>
<b style="top:705px;font-family:'Liberation Mono',monospace;font-size:11px;line-height:11px;color:#000;letter-spacing:0.82px;left:444.82px;width:600px;text-align:right;-webkit-text-stroke:0.15px #000;">$0</b>
<b style="top:718px;font-family:'Liberation Mono',monospace;font-size:9.5px;line-height:9.5px;color:#000;left:849px;-webkit-text-stroke:0.35px #000;">OBLDG VALUE</b>
<b style="top:718px;font-family:'Liberation Mono',monospace;font-size:12.4px;line-height:12.4px;color:#000;left:949px;">+</b>
<b style="top:719px;font-family:'Liberation Mono',monospace;font-size:11px;line-height:11px;color:#000;letter-spacing:0.82px;left:444.82px;width:600px;text-align:right;-webkit-text-stroke:0.15px #000;">$9,656</b>
<b style="top:732px;font-family:'Liberation Mono',monospace;font-size:9.5px;line-height:9.5px;color:#000;left:849px;-webkit-text-stroke:0.35px #000;">LAND VALUE</b>
<b style="top:732px;font-family:'Liberation Mono',monospace;font-size:12.4px;line-height:12.4px;color:#000;left:949px;">+</b>
<b style="top:733px;font-family:'Liberation Mono',monospace;font-size:11px;line-height:11px;color:#000;letter-spacing:0.82px;left:444.82px;width:600px;text-align:right;-webkit-text-stroke:0.15px #000;">$13,995</b>
<b style="top:746px;font-family:'Liberation Mono',monospace;font-size:9.5px;line-height:9.5px;color:#000;left:849px;-webkit-text-stroke:0.35px #000;">APPRAISED VALUE</b>
<b style="top:747px;font-family:'Liberation Mono',monospace;font-size:11px;line-height:11px;color:#000;letter-spacing:0.82px;left:444.82px;width:600px;text-align:right;-webkit-text-stroke:0.15px #000;">$23,651</b>
<b style="top:760px;font-family:'Liberation Mono',monospace;font-size:9.5px;line-height:9.5px;color:#000;left:849px;-webkit-text-stroke:0.35px #000;">DEFERRED VALUE</b>
<b style="top:760px;font-family:'Liberation Mono',monospace;font-size:12.4px;line-height:12.4px;color:#000;left:949px;">–</b>
<b style="top:761px;font-family:'Liberation Mono',monospace;font-size:11px;line-height:11px;color:#000;letter-spacing:0.82px;left:444.82px;width:600px;text-align:right;-webkit-text-stroke:0.15px #000;">$0</b>
<i style="left:902px;top:773px;width:145px;height:26px;background:#ffff00"></i>
<i style="left:902px;top:772px;width:1px;height:28px;background:#000"></i>
<b style="top:775px;font-family:'Liberation Mono',monospace;font-size:9.5px;line-height:9.5px;color:#000;left:574px;width:600px;text-align:center;-webkit-text-stroke:0.35px #000;">TAXABLE</b>
<b style="top:785px;font-family:'Liberation Mono',monospace;font-size:9.5px;line-height:9.5px;color:#000;left:574px;width:600px;text-align:center;-webkit-text-stroke:0.35px #000;">VALUE</b>
<b style="top:775px;font-family:'Liberation Sans',sans-serif;font-size:19px;line-height:19px;color:#e00000;font-weight:bold;left:444px;width:600px;text-align:right;">$23,651</b>
</body></html>
